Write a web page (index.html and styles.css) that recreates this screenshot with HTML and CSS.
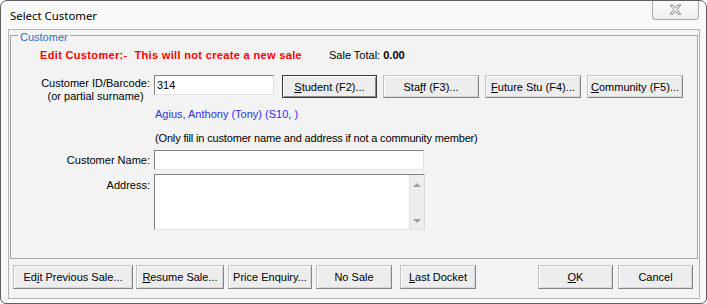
FILE: index.html
```html
<!DOCTYPE html>
<html>
<head>
<meta charset="utf-8">
<title>Select Customer</title>
<link rel="stylesheet" href="styles.css">
</head>
<body>
<div class="window">
  <div class="titlebar">
    <span class="title">Select Customer</span>
    <div class="close">
      <svg width="13" height="11" viewBox="0 0 13 11"><path d="M1 1 H4 L6.5 4 L9 1 H12 L8 5.5 L12 10 H9 L6.5 7 L4 10 H1 L5 5.5 Z" fill="#f4f4f4" stroke="#8a8a8a" stroke-width="1" stroke-linejoin="round"/></svg>
    </div>
  </div>
  <div class="client">
    <div class="group">
      <span class="legend">Customer</span>
      <div class="row1">
        <span class="warn">Edit Customer:-&nbsp; This will not create a new sale</span>
        <span class="total">Sale Total: <b>0.00</b></span>
      </div>
      <div class="frow id-row">
        <div class="lbl two"><span class="lbl-block">Customer ID/Barcode:<br>(or partial surname)</span></div>
        <div class="input id-input">314</div>
        <div class="btn default b-student"><u>S</u>tudent (F2)...</div>
        <div class="btn b-cat">Sta<u>f</u>f (F3)...</div>
        <div class="btn b-cat"><u>F</u>uture Stu (F4)...</div>
        <div class="btn b-cat"><u>C</u>ommunity (F5)...</div>
      </div>
      <div class="found">Agius, Anthony (Tony) (S10, )</div>
      <div class="note">(Only fill in customer name and address if not a community member)</div>
      <div class="frow name-row">
        <div class="lbl">Customer Name:</div>
        <div class="input name-input"></div>
      </div>
      <div class="frow addr-row">
        <div class="lbl addr-lbl">Address:</div>
        <div class="input addr-input">
          <div class="scroll">
            <span class="arr up"></span>
            <span class="arr down"></span>
          </div>
        </div>
      </div>
    </div>
    <div class="actions">
      <div class="btn a-edit">Ed<u>i</u>t Previous Sale...</div>
      <div class="btn a-resume"><u>R</u>esume Sale...</div>
      <div class="btn a-price">Price Enquiry...</div>
      <div class="btn a-nosale">No Sale</div>
      <div class="btn a-last"><u>L</u>ast Docket</div>
      <div class="btn a-ok"><u>O</u>K</div>
      <div class="btn a-cancel">Cancel</div>
    </div>
  </div>
</div>
</body>
</html>
```

FILE: styles.css
```css
html, body {
  margin: 0;
  padding: 0;
  background: #ffffff;
}
body {
  font-family: "Liberation Sans", Arial, sans-serif;
  font-size: 11px;
  color: #000;
}
.window {
  width: 707px;
  height: 304px;
  box-sizing: border-box;
  border: 1px solid #5f5f5f;
  border-radius: 7px 7px 6px 6px;
  background: #f9f9f9;
  display: flex;
  flex-direction: column;
  overflow: hidden;
}
.titlebar {
  height: 28px;
  flex: none;
  display: flex;
  align-items: center;
  padding-left: 9px;
}
.title {
  font-family: "Noto Sans", "Open Sans", sans-serif;
  font-size: 11.4px;
  color: #000;
  padding-top: 1px;
}
.close {
  margin-left: auto;
  margin-right: 7px;
  align-self: flex-start;
  margin-top: -1px;
  width: 47px;
  height: 20px;
  box-sizing: border-box;
  border: 1px solid #a9a9a9;
  border-top: none;
  border-radius: 0 0 4px 4px;
  background: linear-gradient(#fdfdfd, #eeeeee);
  display: flex;
  align-items: center;
  justify-content: center;
}
.close svg { display: block; }
.client {
  flex: 1;
  margin: 0 6px 4px 7px;
  border: 1px solid #b4b4b4;
  background: #f3f3f3;
  display: flex;
  flex-direction: column;
}
.group {
  position: relative;
  margin: 5px 1px 0 1px;
  height: 224px;
  box-sizing: border-box;
  border: 1px solid #a6a6a6;
}
.legend {
  position: absolute;
  top: -6px;
  left: 7px;
  padding: 0 2px;
  line-height: 14px;
  background: #f3f3f3;
  color: #1a6fe0;
}
.row1 {
  display: flex;
  margin: 12px 0 0 29px;
  line-height: 14px;
}
.warn {
  width: 289px;
  flex: none;
  color: #ff0000;
  font-weight: bold;
  letter-spacing: 0.34px;
}
.frow {
  display: flex;
  align-items: flex-start;
}
.lbl {
  width: 139px;
  flex: none;
  margin-right: 4px;
  text-align: right;
  line-height: 20px;
}
.lbl.two {
  line-height: 13px;
  padding-top: 2px;
}
.lbl-block {
  display: inline-block;
  text-align: center;
}
.id-row { margin-top: 13px; }
.input {
  box-sizing: border-box;
  height: 20px;
  background: #fff;
  border: 1px solid;
  border-color: #7f7f7f #dcdcdc #e3e3e3 #7f7f7f;
  line-height: 18px;
  padding-left: 2px;
}
.id-input { width: 120px; }
.btn {
  box-sizing: border-box;
  height: 23px;
  display: flex;
  align-items: center;
  justify-content: center;
  background: #ededed;
  border: 1px solid;
  border-color: #c2c2c2 #858585 #858585 #c2c2c2;
  box-shadow: inset 1px 1px #fdfdfd, inset -1px -1px #d6d6d6;
  white-space: nowrap;
}
.btn u { text-underline-offset: 1px; }
.btn.default {
  border-color: #3c3c3c;
  box-shadow: inset 1px 1px #fdfdfd, inset -1px -1px #8a8a8a;
}
.b-student { width: 95px; margin-left: 8px; }
.b-cat { width: 96px; margin-left: 6px; }
.found {
  margin: 4px 0 0 144px;
  line-height: 14px;
  color: #3030ee;
}
.note {
  margin: 10px 0 0 144px;
  line-height: 14px;
  letter-spacing: -0.16px;
}
.name-row { margin-top: 5px; }
.name-input { width: 270px; }
.addr-row { margin-top: 4px; }
.addr-lbl { line-height: 14px; padding-top: 4px; }
.addr-input {
  width: 271px;
  height: 56px;
  display: flex;
  justify-content: flex-end;
  padding: 0;
}
.scroll {
  width: 15px;
  background: #ededed;
  border-left: 1px solid #e2e2e2;
  display: flex;
  flex-direction: column;
  justify-content: space-between;
  align-items: center;
  padding: 8px 0 6px;
  box-sizing: border-box;
}
.arr {
  width: 0;
  height: 0;
  border-left: 4px solid transparent;
  border-right: 4px solid transparent;
}
.arr.up { border-bottom: 4px solid #a0a0a0; }
.arr.down { border-top: 4px solid #a0a0a0; }
.actions {
  display: flex;
  margin-top: 6px;
  padding: 0 6px 0 4px;
}
.actions .btn { height: 24px; }
.a-edit { width: 120px; }
.a-resume { width: 88px; margin-left: 3px; }
.a-price { width: 84px; margin-left: 4px; }
.a-nosale { width: 76px; margin-left: 4px; }
.a-last { width: 76px; margin-left: 8px; }
.a-ok { width: 75px; margin-left: auto; }
.a-cancel { width: 75px; margin-left: 5px; }
```
